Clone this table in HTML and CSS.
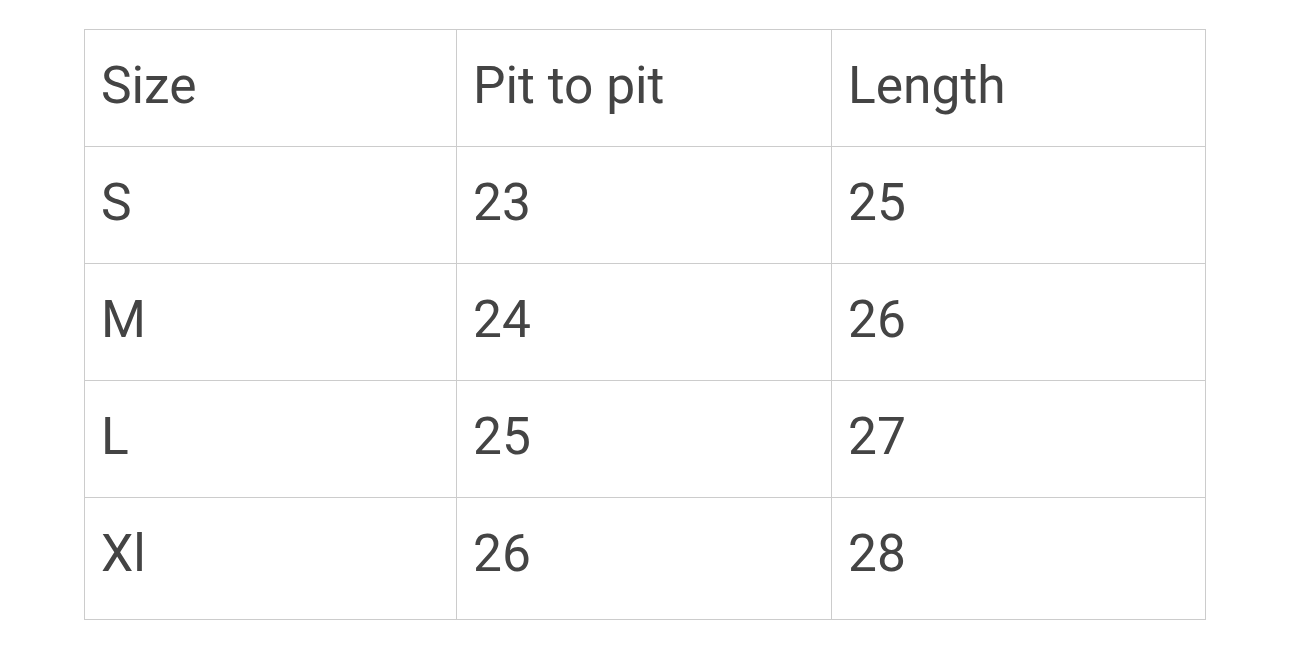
FILE: index.html
```html
<!DOCTYPE html>
<html>
<head>
<meta charset="utf-8">
<link rel="stylesheet" href="styles.css">
</head>
<body>
<table class="size-table">
  <colgroup>
    <col class="c1"><col class="c2"><col class="c3">
  </colgroup>
  <tr><td>Size</td><td>Pit to pit</td><td>Length</td></tr>
  <tr><td>S</td><td>23</td><td>25</td></tr>
  <tr><td>M</td><td>24</td><td>26</td></tr>
  <tr><td>L</td><td>25</td><td>27</td></tr>
  <tr class="last"><td>Xl</td><td>26</td><td>28</td></tr>
</table>
</body>
</html>
```
FILE: styles.css
```css
html, body { margin: 0; padding: 0; background: #fff; }
body { padding: 29px 0 0 84px; }
.size-table {
  border-collapse: collapse;
  table-layout: fixed;
  width: 1121px;
  font-family: Roboto, "Liberation Sans", sans-serif;
  font-size: 51.5px;
  color: #444;
}
.c1 { width: 372px; }
.c2 { width: 375px; }
.c3 { width: 374px; }
.size-table td {
  border: 1px solid #ccc;
  height: 117px;
  padding: 0 0 5px 16px;
  box-sizing: border-box;
  vertical-align: middle;
  line-height: 1;
}
.size-table tr.last td { height: 122px; padding-bottom: 10px; }
```
